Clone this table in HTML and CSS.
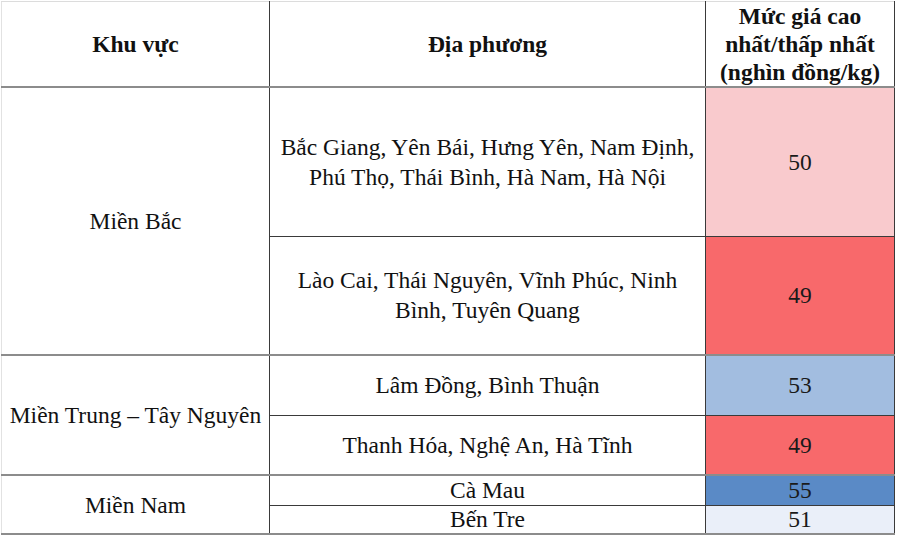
FILE: index.html
```html
<!DOCTYPE html>
<html lang="vi">
<head>
<meta charset="utf-8">
<title>Mức giá</title>
<link rel="stylesheet" href="styles.css">
</head>
<body>
<table class="price-table">
  <colgroup>
    <col class="c-region">
    <col class="c-place">
    <col class="c-price">
  </colgroup>
  <thead>
    <tr class="row-head">
      <th>Khu vực</th>
      <th>Địa phương</th>
      <th>Mức giá cao<br>nhất/thấp nhất<br>(nghìn đồng/kg)</th>
    </tr>
  </thead>
  <tbody>
    <tr class="row-a">
      <td rowspan="2" class="region grp-end">Miền Bắc</td>
      <td class="inner">Bắc Giang, Yên Bái, Hưng Yên, Nam Định,<br>Phú Thọ, Thái Bình, Hà Nam, Hà Nội</td>
      <td class="inner val v50">50</td>
    </tr>
    <tr class="row-b">
      <td class="grp-end">Lào Cai, Thái Nguyên, Vĩnh Phúc, Ninh<br>Bình, Tuyên Quang</td>
      <td class="grp-end val v49">49</td>
    </tr>
    <tr class="row-c">
      <td rowspan="2" class="region grp-end">Miền Trung – Tây Nguyên</td>
      <td class="inner">Lâm Đồng, Bình Thuận</td>
      <td class="inner val v53">53</td>
    </tr>
    <tr class="row-c">
      <td class="grp-end">Thanh Hóa, Nghệ An, Hà Tĩnh</td>
      <td class="grp-end val v49">49</td>
    </tr>
    <tr class="row-d">
      <td rowspan="2" class="region grp-end">Miền Nam</td>
      <td class="inner tight">Cà Mau</td>
      <td class="inner tight val v55">55</td>
    </tr>
    <tr class="row-e">
      <td class="grp-end tight">Bến Tre</td>
      <td class="grp-end tight val v51">51</td>
    </tr>
  </tbody>
</table>
</body>
</html>
```

FILE: styles.css
```css
html, body {
  margin: 0;
  padding: 0;
  background: #ffffff;
}

body {
  padding: 1px 0 0 1px;
  font-family: "Liberation Serif", serif;
  color: #111111;
}

.price-table {
  border-collapse: collapse;
  table-layout: fixed;
  width: 894px;
  font-family: "Liberation Serif", serif;
  font-size: 23.5px;
  line-height: 30px;
  border-top: 1px solid #dcdcdc;
  border-left: 1px solid #e2e2e2;
  border-right: 1px solid #3a3a3a;
}

.c-region { width: 268px; }
.c-place { width: 436px; }
.c-price { width: 189px; }

.price-table th,
.price-table td {
  padding: 0;
  text-align: center;
  vertical-align: middle;
  border-right: 1px solid #3a3a3a;
}

.price-table th {
  font-weight: bold;
  line-height: 28px;
  border-bottom: 2px solid #8c8c8c;
}

.row-head { height: 85px; }
.row-a { height: 149px; }
.row-b { height: 119px; }
.row-c { height: 60px; }
.row-d { height: 30px; }
.row-e { height: 29px; }

.price-table .tight { line-height: 27px; }

.inner { border-bottom: 1px solid #3a3a3a; }
.grp-end { border-bottom: 2px solid #8c8c8c; }

.val { color: #1a1a1a; }
.v50 { background: #f9cacd; }
.v49 { background: #f8696b; }
.v53 { background: #a2bde0; }
.v55 { background: #5a8ac6; }
.v51 { background: #eaeff9; }
```
